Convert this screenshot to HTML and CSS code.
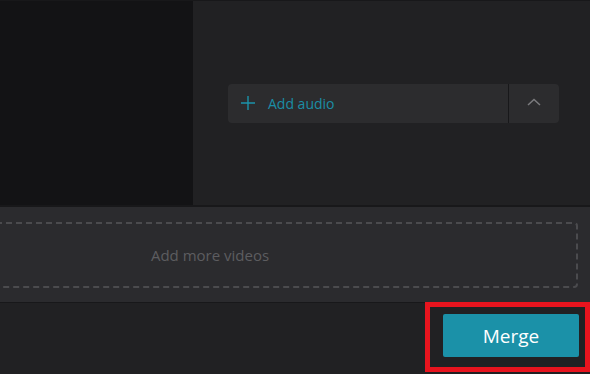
FILE: index.html
```html
<!DOCTYPE html>
<html lang="en">
<head>
    <meta charset="UTF-8">
    <meta name="viewport" content="width=device-width, initial-scale=1.0">
    <title>Merge videos</title>
    <link rel="stylesheet" href="styles.css">
</head>
<body>
    <div class="top">
        <div class="preview"></div>
        <div class="side">
            <div class="audio-bar">
                <button class="audio-add">
                    <svg class="plus" width="14" height="14" viewBox="0 0 14 14">
                        <path d="M7 0V14M0 7H14" stroke="#1b93aa" stroke-width="1.4" fill="none"/>
                    </svg>
                    <span>Add audio</span>
                </button>
                <button class="audio-toggle">
                    <svg width="14" height="8" viewBox="0 0 14 8">
                        <path d="M1 7L7 1.5L13 7" stroke="#7b7b7e" stroke-width="1.5" fill="none"/>
                    </svg>
                </button>
            </div>
        </div>
    </div>
    <div class="clips">
        <div class="dropzone">Add more videos</div>
    </div>
    <div class="footer">
        <button class="merge">Merge</button>
    </div>
    <div class="highlight"></div>
</body>
</html>
```

FILE: styles.css
```css
* {
    box-sizing: border-box;
}

body {
    margin: 0;
    padding: 0;
    background-color: #212123;
    font-family: "Open Sans", "Noto Sans", sans-serif;
    overflow: hidden;
    position: relative;
    height: 374px;
}

button {
    font-family: inherit;
    border: none;
    cursor: pointer;
}

.top {
    display: flex;
    height: 207px;
    border-top: 1px solid #18181a;
    border-bottom: 2px solid #18181a;
}

.preview {
    width: 193px;
    background-color: #131315;
}

.side {
    flex: 1;
    display: flex;
    align-items: center;
    padding: 0 31px 0 35px;
    background-color: #212123;
}

.audio-bar {
    flex: 1;
    display: flex;
    height: 39px;
    background-color: #2c2c2e;
    border-radius: 4px;
    overflow: hidden;
}

.audio-add {
    flex: 1;
    display: flex;
    align-items: center;
    gap: 13px;
    padding: 0 0 0 13px;
    background: none;
    color: #1b8ea6;
    font-size: 14px;
    text-align: left;
}

.audio-toggle {
    width: 51px;
    display: flex;
    align-items: center;
    justify-content: center;
    background: none;
    border-left: 1px solid #18181a;
    padding: 0 0 2px;
}

.clips {
    height: 96px;
    background-color: #2b2b2e;
    padding: 15px 12px 0 0;
    border-bottom: 1px solid #18181a;
}

.dropzone {
    margin-left: -158px;
    height: 66px;
    border: 2px dashed #4b4b4e;
    border-radius: 4px;
    display: flex;
    align-items: center;
    justify-content: center;
    color: #5d5d60;
    font-size: 15px;
}

.footer {
    display: flex;
    justify-content: flex-end;
    padding: 11px 11px 0 0;
}

.merge {
    width: 136px;
    height: 43px;
    background-color: #1b91a8;
    color: #ffffff;
    font-size: 19px;
    border-radius: 2px;
}

.highlight {
    position: absolute;
    left: 425px;
    top: 302px;
    width: 165px;
    height: 70px;
    border: 5px solid #e8141e;
    pointer-events: none;
}
```
